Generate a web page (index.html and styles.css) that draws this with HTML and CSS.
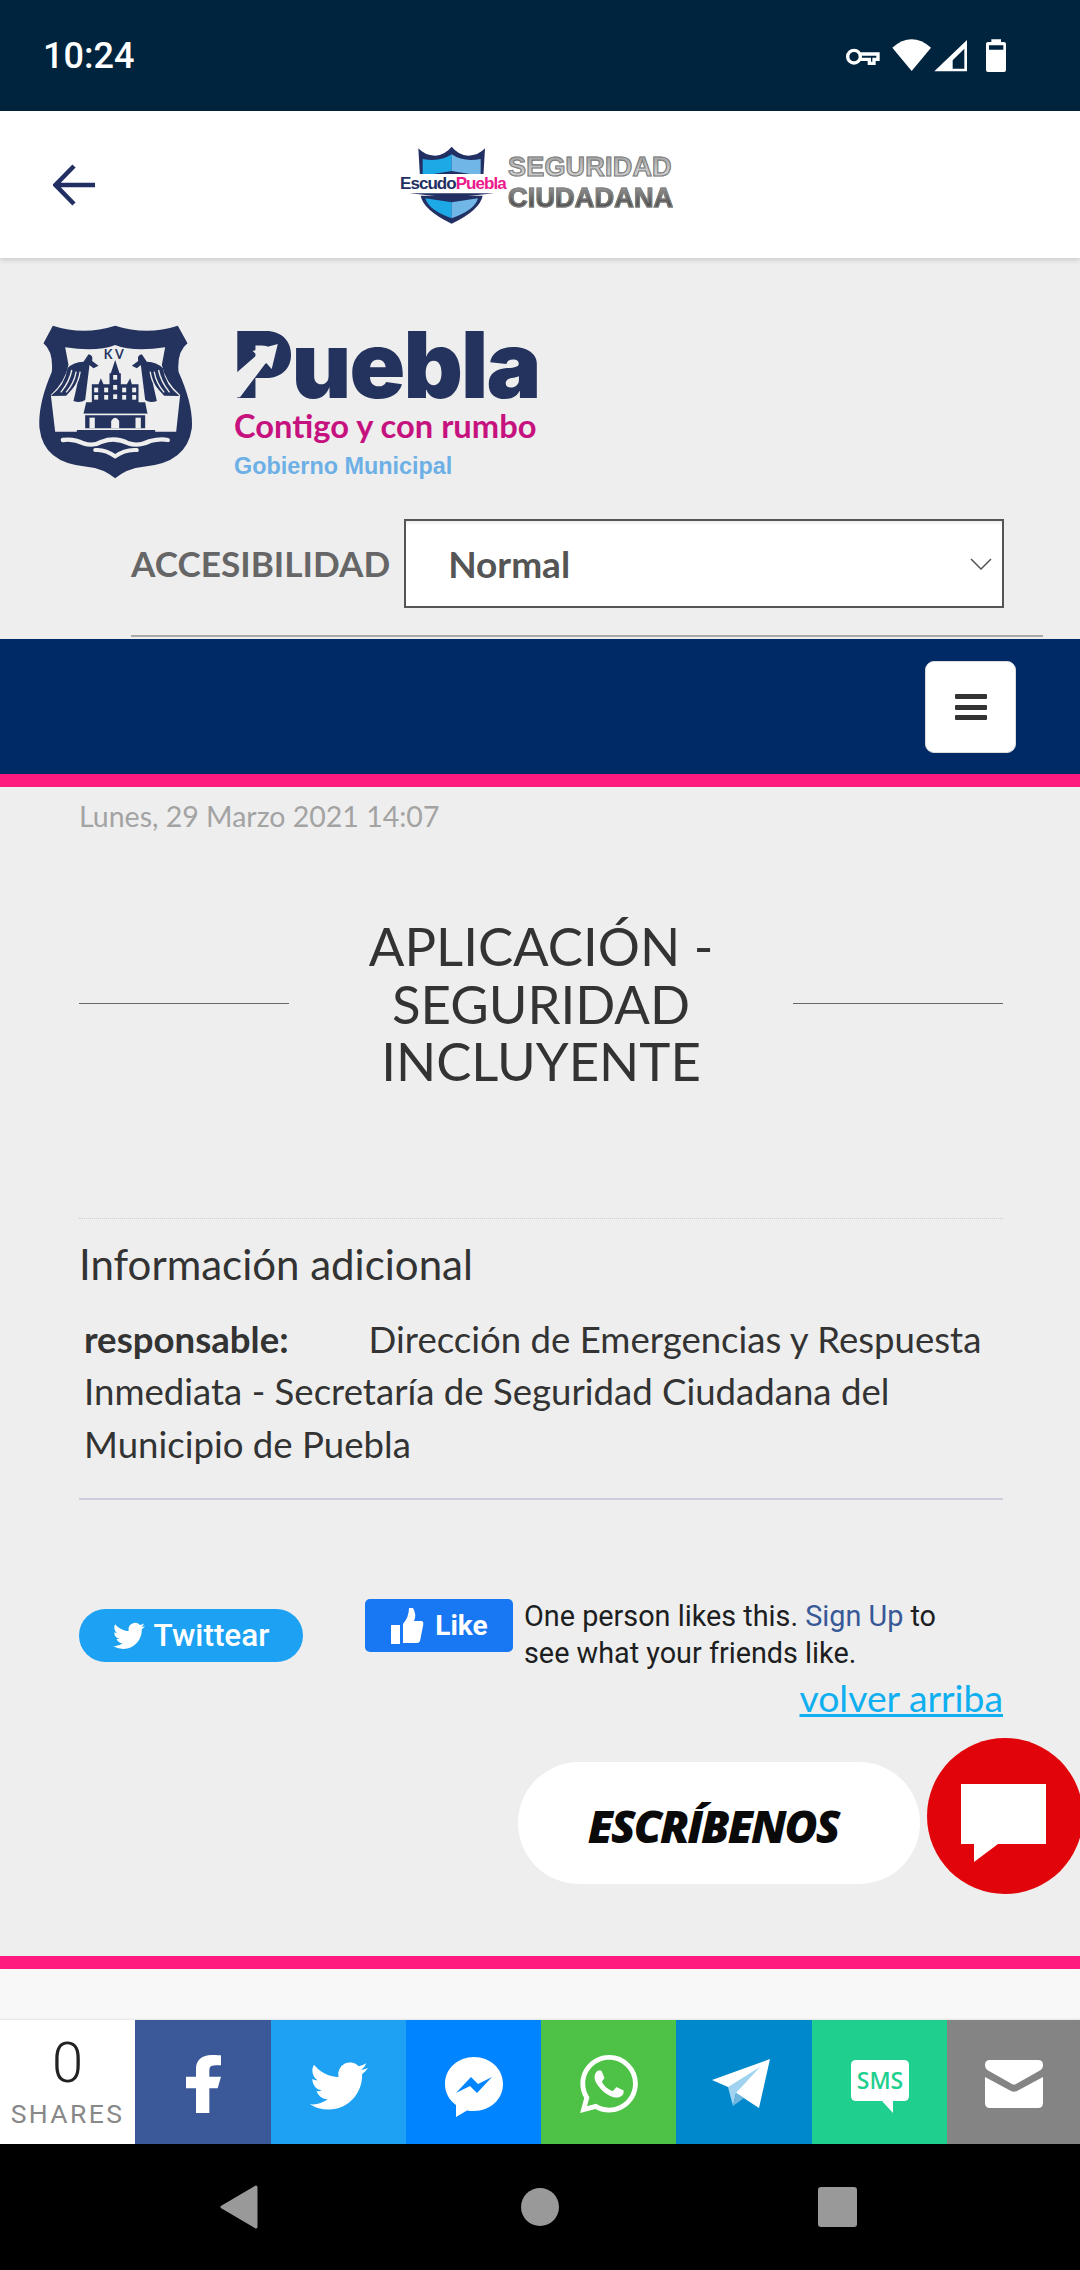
FILE: index.html
```html
<!DOCTYPE html>
<html lang="es">
<head>
<meta charset="utf-8">
<title>Aplicación - Seguridad Incluyente</title>
<link rel="stylesheet" href="styles.css">
</head>
<body>
<div class="page">
  <div class="status">
    <span class="time">10:24</span>
    <svg class="status-icons" viewBox="0 0 570 180" width="190" height="60">
      <g fill="none" stroke="#fff" stroke-width="10"><circle cx="72" cy="92" r="19"/><path d="M91 84H144V100H132V112H118V100H91"/></g>
      <path d="M187 65Q245 15 303 65L245 135Z" fill="#fff"/>
      <path fill-rule="evenodd" d="M313 136L411 42V136ZM368 128H403V68L368 103Z" fill="#fff"/>
      <path fill-rule="evenodd" d="M484 40H513V48H522Q528 48 528 54V132Q528 138 522 138H474Q468 138 468 132V54Q468 48 474 48H484ZM477 58V71H520V58Z" fill="#fff"/>
    </svg>
  </div>

  <header class="appbar">
    <svg class="back" viewBox="0 0 42 42" width="42" height="42"><path d="M42 21H3M21 2L2.500 21L21 40" fill="none" stroke="#222f63" stroke-width="4.500"/></svg>
    <div class="brand">
      <div class="badge">
        <svg class="badge-art" viewBox="30 30 312 240" width="104" height="80">
          <path d="M85 40Q105 62 135 62Q165 60 185 35Q205 60 235 62Q265 62 285 40L280 125H90Z" fill="#222f63"/>
          <path d="M98 72Q150 82 185 58V108L98 122Z" fill="#1ca9e6"/>
          <path d="M272 72Q220 82 185 58V108L272 122Z" fill="#70b7e8"/>
          <path d="M58 124H312L185 114Z" fill="#222f63"/>
          <path d="M58 175H312L185 188Z" fill="#222f63"/>
          <path d="M92 182H278Q270 225 185 266Q100 225 92 182Z" fill="#222f63"/>
          <path d="M106 190L185 202V250Q115 225 106 190Z" fill="#1ca9e6"/>
          <path d="M264 190L185 202V250Q255 225 264 190Z" fill="#70b7e8"/>
        </svg>
        <span class="badge-text"><span class="badge-navy">Escudo</span><span class="badge-pink">Puebla</span></span>
      </div>
      <div class="brand-title">SEGURIDAD<br>CIUDADANA</div>
    </div>
  </header>

  <section class="masthead">
    <div class="logo-row">
      <svg class="crest" viewBox="27 30 458 462" width="153" height="154">
        <path d="M68 32Q160 62 255 32Q350 62 443 32L472 85Q440 110 445 170Q490 270 485 340Q470 445 340 455Q290 460 255 490Q220 460 170 455Q40 445 28 340Q22 270 65 170Q70 110 40 85Z" fill="#24325e"/>
        <path d="M105 97Q200 112 255 90Q310 112 405 97L395 150Q405 200 450 240L438 350H75L62 240Q105 200 115 150Z" fill="#eee"/>
        <g fill="#24325e">
          <path d="M175 118Q190 120 186 138L205 152L190 160L178 150L165 255Q150 265 130 258L142 205L108 242L62 243Q105 210 112 160Q130 140 160 140Z"/>
          <path d="M335 118Q320 120 324 138L305 152L320 160L332 150L345 255Q360 265 380 258L368 205L402 242L448 243Q405 210 398 160Q380 140 350 140Z"/>
          <path d="M255 135L268 175H272V208H290L300 190L305 208H325V262H345L352 296H160L168 262H185V208H205L212 190L220 208H238V175H242Z"/>
          <path d="M165 300H345V340H165Z"/>
          <path d="M140 345H375V355H140Z"/>
          <text x="255" y="132" text-anchor="middle" class="crest-kv">KV</text>
        </g>
        <g fill="none" stroke="#eee" stroke-width="4">
          <path d="M125 165Q118 200 92 232M138 170Q132 205 108 232M150 170Q146 200 128 225"/>
          <path d="M385 165Q392 200 418 232M372 170Q378 205 402 232M360 170Q364 200 382 225"/>
        </g>
        <g fill="#eee">
          <rect x="192" y="218" width="12" height="14"/><rect x="222" y="218" width="12" height="14"/><rect x="249" y="210" width="12" height="14"/><rect x="276" y="218" width="12" height="14"/><rect x="306" y="218" width="12" height="14"/>
          <rect x="192" y="240" width="12" height="14"/><rect x="222" y="240" width="12" height="14"/><rect x="249" y="238" width="12" height="14"/><rect x="276" y="240" width="12" height="14"/><rect x="306" y="240" width="12" height="14"/>
          <rect x="249" y="180" width="12" height="14"/>
          <path d="M160 296H350V301H160Z"/>
          <rect x="178" y="308" width="16" height="32"/><rect x="316" y="308" width="16" height="32"/>
          <path d="M243 340V318Q255 298 267 318V340Z"/>
        </g>
        <g fill="none" stroke="#eee" stroke-linecap="round">
          <path d="M98 375Q130 370 160 385Q190 395 215 380Q255 365 295 385Q325 395 360 378Q390 370 413 375" stroke-width="13"/>
          <path d="M195 405Q225 402 255 424Q285 402 320 405" stroke-width="12"/>
        </g>
      </svg>
      <div class="wordmark">
        <div class="wm-puebla">Puebla<svg class="wm-arrow" viewBox="0 0 45 60" width="45" height="60"><path d="M1.500 32.700L22 15L17.600 11L42.800 4L36.700 29L31 22.700L5 57.300H1.500Z" fill="#eee"/></svg></div>
        <div class="wm-contigo">Contigo y con rumbo</div>
        <div class="wm-gob">Gobierno Municipal</div>
      </div>
    </div>
    <div class="access">
      <span class="access-label">ACCESIBILIDAD</span>
      <div class="select">
        <span>Normal</span>
        <svg viewBox="0 0 22 12" width="22" height="12"><path d="M1 1L11 11L21 1" fill="none" stroke="#555" stroke-width="1.500"/></svg>
      </div>
    </div>
    <div class="access-rule"></div>
  </section>

  <nav class="nav">
    <div class="burger"><i></i><i></i><i></i></div>
  </nav>

  <main class="main">
    <div class="date">Lunes, 29 Marzo 2021 14:07</div>
    <div class="title-row">
      <span class="title-line"></span>
      <h1 class="title">APLICACIÓN - SEGURIDAD INCLUYENTE</h1>
      <span class="title-line"></span>
    </div>
    <section class="info">
      <h2 class="info-head">Información adicional</h2>
      <p class="info-body"><b class="info-key">responsable:</b>Dirección de Emergencias y Respuesta Inmediata - Secretaría de Seguridad Ciudadana del Municipio de Puebla</p>
    </section>
    <div class="social">
      <a class="tw-btn">
        <svg viewBox="0 0 24 24" width="32" height="32"><path fill="#fff" d="M23.953 4.57a10 10 0 01-2.825.775 4.958 4.958 0 002.163-2.723c-.951.555-2.005.959-3.127 1.184a4.92 4.92 0 00-8.384 4.482C7.69 8.095 4.067 6.13 1.64 3.162a4.822 4.822 0 00-.666 2.475c0 1.71.87 3.213 2.188 4.096a4.904 4.904 0 01-2.228-.616v.06a4.923 4.923 0 003.946 4.827 4.996 4.996 0 01-2.212.085 4.936 4.936 0 004.604 3.417 9.867 9.867 0 01-6.102 2.105c-.39 0-.779-.023-1.17-.067a13.995 13.995 0 007.557 2.209c9.053 0 13.998-7.496 13.998-13.985 0-.21 0-.42-.015-.63A9.935 9.935 0 0024 4.59z"/></svg>
        <span>Twittear</span>
      </a>
      <a class="fb-btn">
        <svg viewBox="0 0 34 38" width="34" height="38"><path fill="#fff" d="M1 18H10V37H1ZM13 17Q19 10 19 1H23Q27 8 24 14H32Q34 15 33 19L30 34Q29 36 27 36H13Z"/></svg>
        <span>Like</span>
      </a>
      <p class="fb-text">One person likes this. <a class="fb-link">Sign Up</a> to see what your friends like.</p>
    </div>
    <div class="top-row"><a class="top-link">volver arriba</a></div>
    <div class="chat-row">
      <div class="chat-pill">ESCRÍBENOS</div>
      <div class="chat-fab">
        <svg viewBox="0 0 85 78" width="85" height="78"><path d="M0 0H85V60H37L13 78V60H0Z" fill="#fff"/></svg>
      </div>
    </div>
  </main>

  <footer class="foot">
    <div class="foot-blank"></div>
    <div class="share">
      <div class="share-count"><span class="share-num">0</span><span class="share-lbl">SHARES</span></div>
      <a class="share-item s-fb"><svg viewBox="7 2 10.500 20" width="35" height="58" preserveAspectRatio="none"><path fill="#fff" d="M14 13.500h2.500l1-4H14v-2c0-1.030 0-2 2-2h1.500V2.140c-.326-.043-1.557-.14-2.857-.14C11.928 2 10 3.657 10 6.700v2.800H7v4h3V22h4v-8.500z"/></svg></a>
      <a class="share-item s-tw"><svg viewBox="0 0 24 24" width="58" height="58"><path fill="#fff" d="M23.953 4.570a10 10 0 01-2.825.775 4.958 4.958 0 002.163-2.723c-.951.555-2.005.959-3.127 1.184a4.920 4.920 0 00-8.384 4.482C7.690 8.095 4.067 6.130 1.640 3.162a4.822 4.822 0 00-.666 2.475c0 1.710.870 3.213 2.188 4.096a4.904 4.904 0 01-2.228-.616v.060a4.923 4.923 0 003.946 4.827 4.996 4.996 0 01-2.212.085 4.936 4.936 0 004.604 3.417 9.867 9.867 0 01-6.102 2.105c-.390 0-.779-.023-1.170-.067a13.995 13.995 0 007.557 2.209c9.053 0 13.998-7.496 13.998-13.985 0-.210 0-.420-.015-.630A9.935 9.935 0 0024 4.590z"/></svg></a>
      <a class="share-item s-ms"><svg viewBox="0 0 58 60" width="58" height="60"><path fill="#fff" d="M29 0C13 0 0 11.500 0 27C0 35.500 4 43 11 48V60L22 53.500Q25.500 54 29 54C45 54 58 42.500 58 27S45 0 29 0Z"/><path fill="#0084ff" d="M11 36L26 20L33 27L47 20L32 36L25 29Z"/></svg></a>
      <a class="share-item s-wa"><svg viewBox="0 0 24 24" width="58" height="58"><path fill="#fff" d="M17.472 14.382c-.297-.149-1.758-.867-2.030-.967-.273-.099-.471-.148-.670.150-.197.297-.767.966-.940 1.164-.173.199-.347.223-.644.075-.297-.150-1.255-.463-2.390-1.475-.883-.788-1.480-1.761-1.653-2.059-.173-.297-.018-.458.130-.606.134-.133.298-.347.446-.520.149-.174.198-.298.298-.497.099-.198.050-.371-.025-.520-.075-.149-.669-1.612-.916-2.207-.242-.579-.487-.500-.669-.510-.173-.008-.371-.010-.570-.010-.198 0-.520.074-.792.372-.272.297-1.040 1.016-1.040 2.479 0 1.462 1.065 2.875 1.213 3.074.149.198 2.096 3.200 5.077 4.487.709.306 1.262.489 1.694.625.712.227 1.360.195 1.871.118.571-.085 1.758-.719 2.006-1.413.248-.694.248-1.289.173-1.413-.074-.124-.272-.198-.570-.347m-5.421 7.403h-.004a9.870 9.870 0 01-5.031-1.378l-.361-.214-3.741.982.998-3.648-.235-.374a9.860 9.860 0 01-1.510-5.260c.001-5.450 4.436-9.884 9.888-9.884 2.640 0 5.122 1.030 6.988 2.898a9.825 9.825 0 012.893 6.994c-.003 5.450-4.437 9.884-9.885 9.884m8.413-18.297A11.815 11.815 0 0012.050 0C5.495 0 .160 5.335.157 11.892c0 2.096.547 4.142 1.588 5.945L.057 24l6.305-1.654a11.882 11.882 0 005.683 1.448h.005c6.554 0 11.890-5.335 11.893-11.893a11.821 11.821 0 00-3.480-8.413z"/></svg></a>
      <a class="share-item s-tg"><svg viewBox="0 0 60 50" width="60" height="50"><path fill="#fff" d="M1 21L59 0L48 49L25 34L17 28Z"/><path fill="#9fd3f0" d="M17 28L49 8L25 34L22 47Z"/><path fill="#6fb5dd" d="M25 34L33 39L22 47Z"/></svg></a>
      <a class="share-item s-sm"><svg viewBox="0 0 58 53" width="58" height="53"><path fill="#fff" d="M5 0H53Q58 0 58 5V36Q58 41 53 41H42V53L31 41H5Q0 41 0 36V5Q0 0 5 0Z"/><text x="29" y="29" text-anchor="middle" class="sms-text">SMS</text></svg></a>
      <a class="share-item s-em"><svg viewBox="0 0 58 48" width="58" height="48"><path fill="#fff" d="M5 0H53Q58 0 58 5Q58 9 54 11L31 24Q29 25 27 24L4 11Q0 9 0 5Q0 0 5 0ZM0 17L26 31Q29 32.500 32 31L58 17V43Q58 48 53 48H5Q0 48 0 43Z"/></svg></a>
    </div>
    <div class="sysnav">
      <svg viewBox="0 0 38 44" width="38" height="44"><path d="M36 2L2 22L36 42Z" fill="#999" stroke="#999" stroke-width="3" stroke-linejoin="round"/></svg>
      <span class="sys-circle"></span>
      <span class="sys-square"></span>
    </div>
  </footer>
</div>
</body>
</html>
```
FILE: styles.css
```css
* { box-sizing: border-box; }
html, body { margin: 0; padding: 0; }
body { width: 1080px; height: 2270px; overflow: hidden; background: #eee; font-family: "Lato", sans-serif; }
.page { width: 1080px; height: 2270px; display: flex; flex-direction: column; overflow: hidden; }

.status { height: 111px; flex: none; background: #00243d; display: flex; align-items: center; padding: 0 60px 0 43px; }
.time { color: #fff; font: 500 36px "Roboto", sans-serif; }
.status-icons { margin-left: auto; }

.appbar { height: 147px; flex: none; background: #fff; position: relative; display: flex; align-items: center; padding-left: 53px; box-shadow: 0 2px 5px rgba(0,0,0,.15); z-index: 1; }
.back { flex: none; }
.brand { display: flex; align-items: center; gap: 4px; margin-left: 305px; }
.badge { position: relative; width: 104px; height: 80px; }
.badge-art { display: block; }
.badge-text { position: absolute; left: 0; top: 29px; width: 104px; font: 700 17px/19px "Liberation Sans", sans-serif; letter-spacing: -.95px; white-space: nowrap; background: #fff; }
.badge-navy { color: #222f63; }
.badge-pink { color: #ec1a8c; }
.brand-title { font: 700 27px/31px "Liberation Sans", sans-serif; padding-bottom: 3px; letter-spacing: .2px; background: linear-gradient(#999, #d0d0d0 32%, #555 78%); -webkit-background-clip: text; background-clip: text; color: transparent; -webkit-text-stroke: 1.100px #808080; }

.masthead { height: 381px; flex: none; display: flex; flex-direction: column; }
.logo-row { display: flex; padding: 67px 0 0 39px; gap: 43px; height: 261px; }
.crest { display: block; flex: none; }
.wordmark { display: flex; flex-direction: column; }
.wm-puebla { position: relative; width: 305px; font: 900 92px/84px "Inter", sans-serif; letter-spacing: -1.800px; color: #24325e; margin: -2px 0 0 -2px; white-space: nowrap; }
.wm-arrow { position: absolute; left: 2px; top: 17px; }
.wm-contigo { font: 700 32.700px/40px "Lato", sans-serif; color: #c6127f; white-space: nowrap; margin: -1px 0 0 -1px; }
.wm-gob { font: 700 23.400px/28px "Liberation Sans", sans-serif; color: #6cb0e6; margin: 6px 0 0 -1px; white-space: nowrap; }
.access { display: flex; align-items: center; height: 89px; padding-left: 131px; gap: 14px; }
.access-label { font: 700 35.200px/1 "Lato", sans-serif; color: #666; white-space: nowrap; }
.select { width: 600px; height: 89px; background: #fff; border: 2px solid #555; display: flex; align-items: center; justify-content: space-between; padding: 0 10px 0 42px; font: 700 37px/1 "Lato", sans-serif; color: #555; box-shadow: inset 0 4px 4px -3px rgba(0,0,0,.12); }
.access-rule { margin: 27px 37px 0 131px; height: 2px; background: #aaa; }

.nav { height: 148px; flex: none; background: #002a66; border-bottom: 13px solid #ff1a80; display: flex; justify-content: flex-end; padding: 22px 64px 0 0; }
.burger { width: 91px; height: 92px; background: #fff; border-radius: 9px; border: 1px solid #ddd; display: flex; flex-direction: column; align-items: center; justify-content: center; gap: 5.500px; }
.burger i { display: block; width: 32px; height: 5px; background: #333; border-radius: 1px; }

.main { height: 1169px; flex: none; padding: 9px 77px 0 79px; }
.date { font-size: 28.500px; line-height: 40px; color: #a3a3a3; }
.title-row { display: flex; align-items: center; margin-top: 81px; }
.title-line { flex: 0 0 210px; height: 1px; background: #666; }
.title { flex: 1; margin: 0; padding: 0 20px; text-align: center; font-size: 52.700px; font-weight: 400; line-height: 57.500px; color: #333; }
.info { margin-top: 128.500px; border-top: 1px dotted #ccc; border-bottom: 2px solid #ccd; padding: 22px 0 28px; }
.info-head { margin: 0; font-size: 42px; font-weight: 400; line-height: 46px; color: #333; }
.info-body { margin: 26px 0 0; padding-left: 5px; font-size: 36.600px; line-height: 52.400px; color: #333; }
.info-key { margin-right: 80px; }

.social { display: flex; align-items: flex-start; margin-top: 99px; }
.tw-btn { width: 224px; height: 53px; margin-top: 10px; background: #1da1f2; border-radius: 27px; color: #fff; display: flex; align-items: center; justify-content: center; gap: 9px; font: 500 31.500px "Roboto", sans-serif; }
.fb-btn { width: 148px; height: 53px; margin-left: 62px; background: #1877f2; border-radius: 5px; color: #fff; display: flex; align-items: center; justify-content: center; gap: 11px; font: 700 28px "Roboto", sans-serif; }
.fb-text { margin: -1px 0 0 11px; width: 440px; font: 400 28.800px/37px "Roboto", sans-serif; color: #1c1e21; }
.fb-link { color: #385898; }
.top-row { display: flex; justify-content: flex-end; margin-top: 4px; }
.top-link { font-size: 37.300px; line-height: 44px; color: #0faff0; text-decoration: underline; }

.chat-row { display: flex; justify-content: flex-end; align-items: flex-start; gap: 7px; margin: 18px -80px 0 0; }
.chat-pill { width: 402px; height: 122px; margin-top: 24px; background: #fff; border-radius: 61px; display: flex; align-items: center; justify-content: center; padding: 4px 12px 0 0; font: italic 800 45px "Open Sans", sans-serif; color: #0a0a0a; letter-spacing: -2px; }
.chat-fab { width: 156px; height: 156px; border-radius: 50%; background: #e1040a; display: flex; align-items: center; justify-content: center; padding: 14px 4px 0 0; }

.foot { flex: 1; display: flex; flex-direction: column; }
.foot-blank { height: 64px; flex: none; background: #f8f8f8; border-top: 13px solid #ff1a80; box-shadow: inset 0 -2px 2px -1px rgba(0,0,0,.08); }
.share { height: 124px; flex: none; display: grid; grid-template-columns: 135px 136px 135px 135px 135px 136px 135px 133px; }
.share-count { background: #fff; display: flex; flex-direction: column; align-items: center; font-family: "Roboto", sans-serif; }
.share-num { font-size: 56px; font-weight: 300; line-height: 58px; color: #222; margin-top: 14px; }
.share-lbl { font-size: 26.500px; line-height: 30px; letter-spacing: 2.400px; color: #888; margin-top: 7px; }
.share-item { display: flex; align-items: center; justify-content: center; padding-top: 3px; }
.s-fb { background: #3b5998; }
.s-tw { background: #1fa1f3; padding-top: 8px; }
.s-ms { background: #0084ff; padding-top: 10px; }
.s-wa { background: #4dc247; }
.s-tg { background: #0088cc; padding-right: 6px; }
.s-sm { background: #1ecf8e; padding-top: 8px; }
.s-em { background: #848484; }
.sms-text { font: 600 23px "Open Sans", sans-serif; fill: #1ecf8e; }
.crest-kv { font: 700 38px "Lato", sans-serif; letter-spacing: 8px; }
.sysnav { height: 126px; flex: none; background: #000; display: flex; align-items: center; padding: 0 223px 0 220px; justify-content: space-between; }
.sys-circle { width: 38px; height: 38px; border-radius: 50%; background: #999; margin-left: 4px; }
.sys-square { width: 39px; height: 40px; border-radius: 3px; background: #999; }
```
